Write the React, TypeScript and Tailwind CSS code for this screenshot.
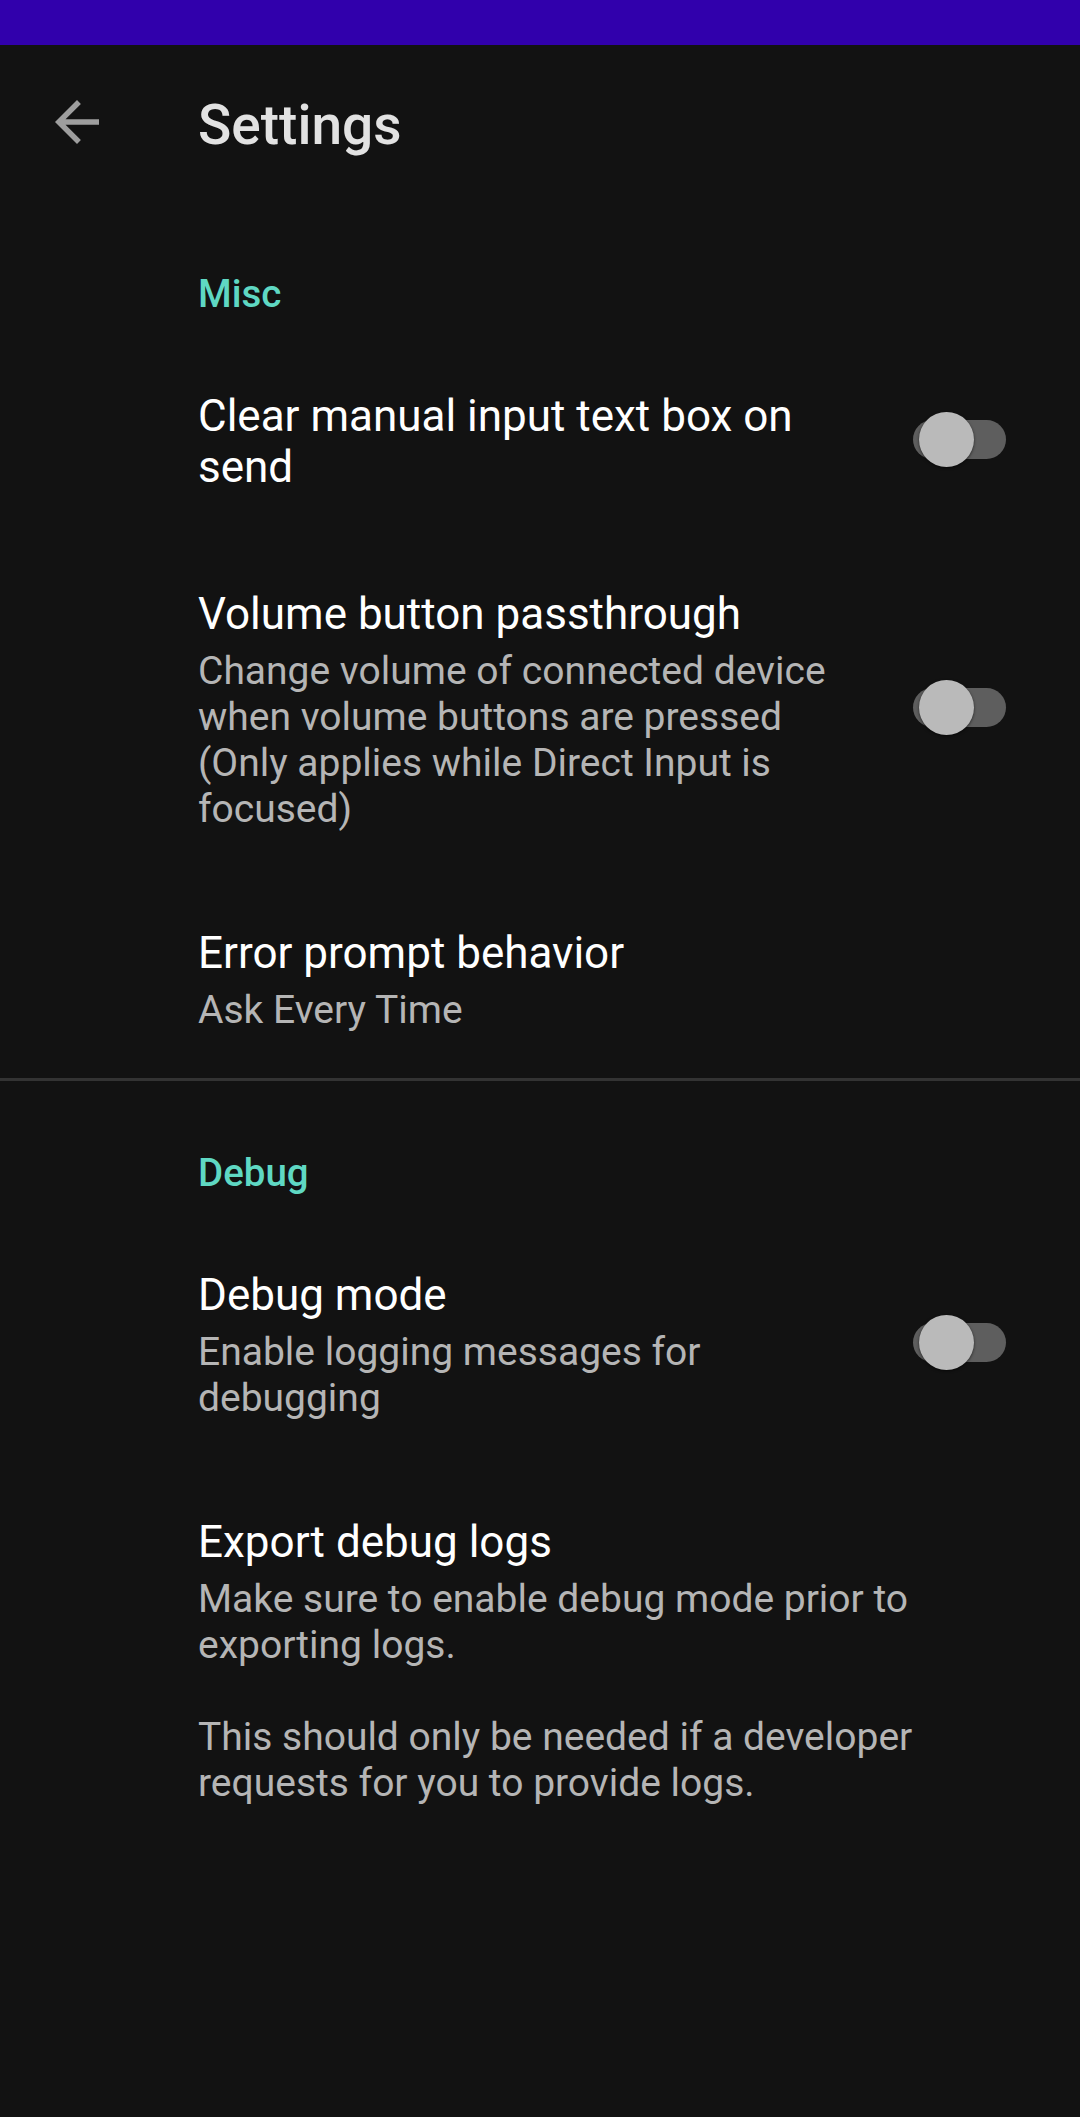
import React from "react";

function Toggle() {
  return (
    <div className="relative mb-[6px] h-[55px] w-[93px] shrink-0">
      <div className="absolute left-0 top-[8px] h-[39px] w-[93px] rounded-full bg-[#5e5e5e]" />
      <div className="absolute left-[6px] top-0 h-[55px] w-[55px] rounded-full bg-[#bababa] shadow-[0_1px_3px_rgba(0,0,0,0.6)]" />
    </div>
  );
}

type ItemProps = {
  title: string;
  summary?: string;
  toggle?: boolean;
  last?: boolean;
};

function Item({ title, summary, toggle, last }: ItemProps) {
  return (
    <div
      className={
        last
          ? "flex items-center pt-[48px] pb-[45px] pl-[198px] pr-[74px]"
          : "flex items-center py-[48px] pl-[198px] pr-[74px]"
      }
    >
      <div className={toggle ? "min-w-0 flex-1 pr-[53px]" : "min-w-0 flex-1"}>
        <div className="text-[44px] leading-[51px] text-white">{title}</div>
        {summary && (
          <div className="mt-[8px] whitespace-pre-line text-[39px] leading-[46px] text-[#b5b5b5]">
            {summary}
          </div>
        )}
      </div>
      {toggle && <Toggle />}
    </div>
  );
}

function Header({ text }: { text: string }) {
  return (
    <div className="mb-[27px] pl-[198px] text-[38.5px] font-medium leading-[45px] text-[#5fd8c3]">
      {text}
    </div>
  );
}

export default function App() {
  return (
    <div
      className="min-h-screen w-full bg-[#121212]"
      style={{ fontFamily: "Roboto, 'Noto Sans', sans-serif" }}
    >
      <div className="h-[45px] w-full bg-[#3100ac]" />
      <div className="flex h-[154px] items-center">
        <div className="ml-[44px] flex h-[66px] w-[66px] items-center justify-center">
          <svg width="66" height="66" viewBox="0 0 24 24" fill="#9e9e9e">
            <path d="M20 11H7.83l5.59-5.59L12 4l-8 8 8 8 1.41-1.41L7.83 13H20v-2z" />
          </svg>
        </div>
        <div className="ml-[88px] pt-[5px] text-[55px] font-medium leading-[64px] text-[#e2e2e2]">
          Settings
        </div>
      </div>

      <div className="pt-[72px]">
        <Header text="Misc" />
        <Item title="Clear manual input text box on send" toggle />
        <Item
          title="Volume button passthrough"
          summary="Change volume of connected device when volume buttons are pressed (Only applies while Direct Input is focused)"
          toggle
        />
        <Item title="Error prompt behavior" summary="Ask Every Time" last />
      </div>

      <div className="h-[3px] w-full bg-[#333333]" />

      <div className="pt-[69px]">
        <Header text="Debug" />
        <Item title="Debug mode" summary="Enable logging messages for debugging" toggle />
        <Item
          title="Export debug logs"
          summary={"Make sure to enable debug mode prior to exporting logs.\n\nThis should only be needed if a developer requests for you to provide logs."}
        />
      </div>
    </div>
  );
}
